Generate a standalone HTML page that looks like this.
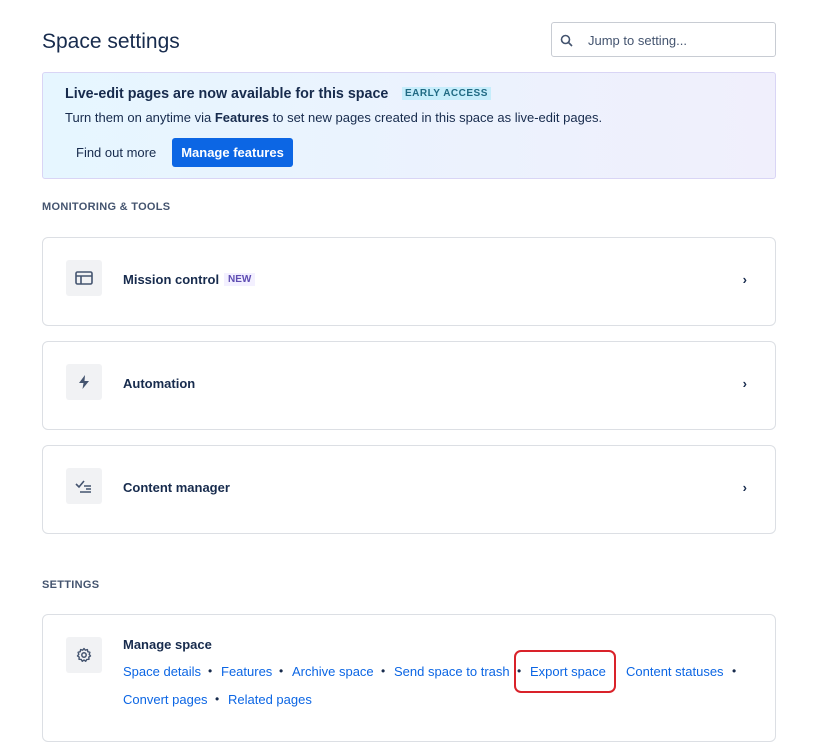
<!DOCTYPE html>
<html><head><style>
*{box-sizing:border-box;margin:0;padding:0}
body{width:825px;height:750px;background:#fff;font-family:"Liberation Sans",sans-serif;color:#172b4d;position:relative;overflow:hidden}
.a{position:absolute;white-space:nowrap}
.card{position:absolute;left:42px;width:734px;border:1px solid #dcdfe4;border-radius:6px;background:#fff}
.ic{position:absolute;left:23px;width:36px;height:36px;background:#f1f2f4;border-radius:3px;display:flex;align-items:center;justify-content:center}
.lbl{position:absolute;left:80px;font-size:13px;font-weight:bold;color:#172b4d}
.chev{position:absolute;right:28px;font-size:13px;font-weight:bold}
.l{position:absolute;font-size:13px;color:#0c66e4;white-space:nowrap}
.d{position:absolute;font-size:12px;color:#172b4d}
</style></head><body>
<div class="a" style="left:42px;top:30px;font-size:21px;color:#172b4d">Space settings</div>
<div class="a" style="left:551px;top:22px;width:225px;height:35px;border:1px solid #c8ccd3;border-radius:3px">
<svg style="position:absolute;left:8px;top:11px" width="13" height="13" viewBox="0 0 13 13"><circle cx="5.5" cy="5.5" r="4" fill="none" stroke="#44546f" stroke-width="1.6"/><path d="M8.5 8.5L12 12" stroke="#44546f" stroke-width="1.6"/></svg>
<span class="a" style="left:36px;top:10px;font-size:13px;color:#44546f">Jump to setting...</span></div>
<div class="a" style="left:42px;top:72px;width:734px;height:107px;border:1px solid #d9d5f5;border-radius:3px;background:linear-gradient(90deg,#e6f6ff,#f0effc)">
<span class="a" style="left:22px;top:13px;font-size:14.3px;font-weight:bold">Live-edit pages are now available for this space</span>
<span class="a" style="left:359px;top:14px;font-size:10px;font-weight:bold;color:#206a83;background:#c6edfb;padding:1px 3px;letter-spacing:.5px">EARLY ACCESS</span>
<span class="a" style="left:22px;top:37px;font-size:13px;color:#172b4d">Turn them on anytime via <b>Features</b> to set new pages created in this space as live-edit pages.</span>
<span class="a" style="left:33px;top:72px;font-size:13px">Find out more</span>
<span class="a" style="left:129px;top:65px;width:121px;height:29px;background:#0c66e4;border-radius:3px;color:#fff;font-size:13px;font-weight:bold;text-align:center;line-height:29px">Manage features</span>
</div>
<div class="a" style="left:42px;top:201px;font-size:11px;font-weight:bold;color:#44546f;letter-spacing:.3px">MONITORING &amp; TOOLS</div>
<div class="card" style="top:237px;height:89px"><div class="ic" style="top:22px"><svg width="18" height="14" viewBox="0 0 18 14"><rect x="1" y="1" width="16" height="12" rx="1.5" fill="none" stroke="#44546f" stroke-width="1.6"/><path d="M1 5H17M6 5V13" stroke="#44546f" stroke-width="1.6"/></svg></div><span class="lbl" style="top:34px">Mission control</span><span class="a" style="left:181px;top:35px;font-size:10px;font-weight:bold;color:#5e4db2;background:#f3f0ff;padding:1px 4px">NEW</span><span class="chev" style="top:34px">›</span></div>
<div class="card" style="top:341px;height:89px"><div class="ic" style="top:22px"><svg width="12" height="14" viewBox="0 0 12 14"><path d="M7 0L1 8H5.5L4.5 14L11 6H6.5Z" fill="#44546f"/></svg></div><span class="lbl" style="top:34px">Automation</span><span class="chev" style="top:34px">›</span></div>
<div class="card" style="top:445px;height:89px"><div class="ic" style="top:22px"><svg width="18" height="14" viewBox="0 0 18 14"><path d="M1 5L4 8L9 2M9 7H16M11 10H16M5 13H16" fill="none" stroke="#44546f" stroke-width="1.6"/></svg></div><span class="lbl" style="top:34px">Content manager</span><span class="chev" style="top:34px">›</span></div>
<div class="a" style="left:42px;top:579px;font-size:11px;font-weight:bold;color:#44546f;letter-spacing:.3px">SETTINGS</div>
<div class="card" style="top:614px;height:128px">
<div class="ic" style="top:22px"><svg width="16" height="16" viewBox="0 0 16 16"><circle cx="8" cy="8" r="2.2" fill="none" stroke="#44546f" stroke-width="1.5"/><path d="M8 1.5L9.3 3.2L11.4 2.6L11.8 4.7L13.9 5.3L13.2 7.3L14.5 8.9L12.8 10.1L13 12.3L10.8 12.4L9.7 14.3L8 13L6.3 14.3L5.2 12.4L3 12.3L3.2 10.1L1.5 8.9L2.8 7.3L2.1 5.3L4.2 4.7L4.6 2.6L6.7 3.2Z" fill="none" stroke="#44546f" stroke-width="1.4" stroke-linejoin="round"/></svg></div>
<span class="a" style="left:80px;top:22px;font-size:13px;font-weight:bold">Manage space</span>
</div>
<span class="l" style="left:123px;top:664px">Space details</span><span class="d" style="left:208px;top:664px">•</span>
<span class="l" style="left:221px;top:664px">Features</span><span class="d" style="left:279px;top:664px">•</span>
<span class="l" style="left:292px;top:664px">Archive space</span><span class="d" style="left:381px;top:664px">•</span>
<span class="l" style="left:394px;top:664px">Send space to trash</span><span class="d" style="left:517px;top:664px">•</span>
<span class="l" style="left:530px;top:664px">Export space</span>
<div class="a" style="left:514px;top:650px;width:102px;height:43px;border:2px solid #d9222a;border-radius:7px"></div>
<span class="l" style="left:626px;top:664px">Content statuses</span><span class="d" style="left:732px;top:664px">•</span>
<span class="l" style="left:123px;top:692px">Convert pages</span><span class="d" style="left:215px;top:692px">•</span>
<span class="l" style="left:228px;top:692px">Related pages</span>
</body></html>
